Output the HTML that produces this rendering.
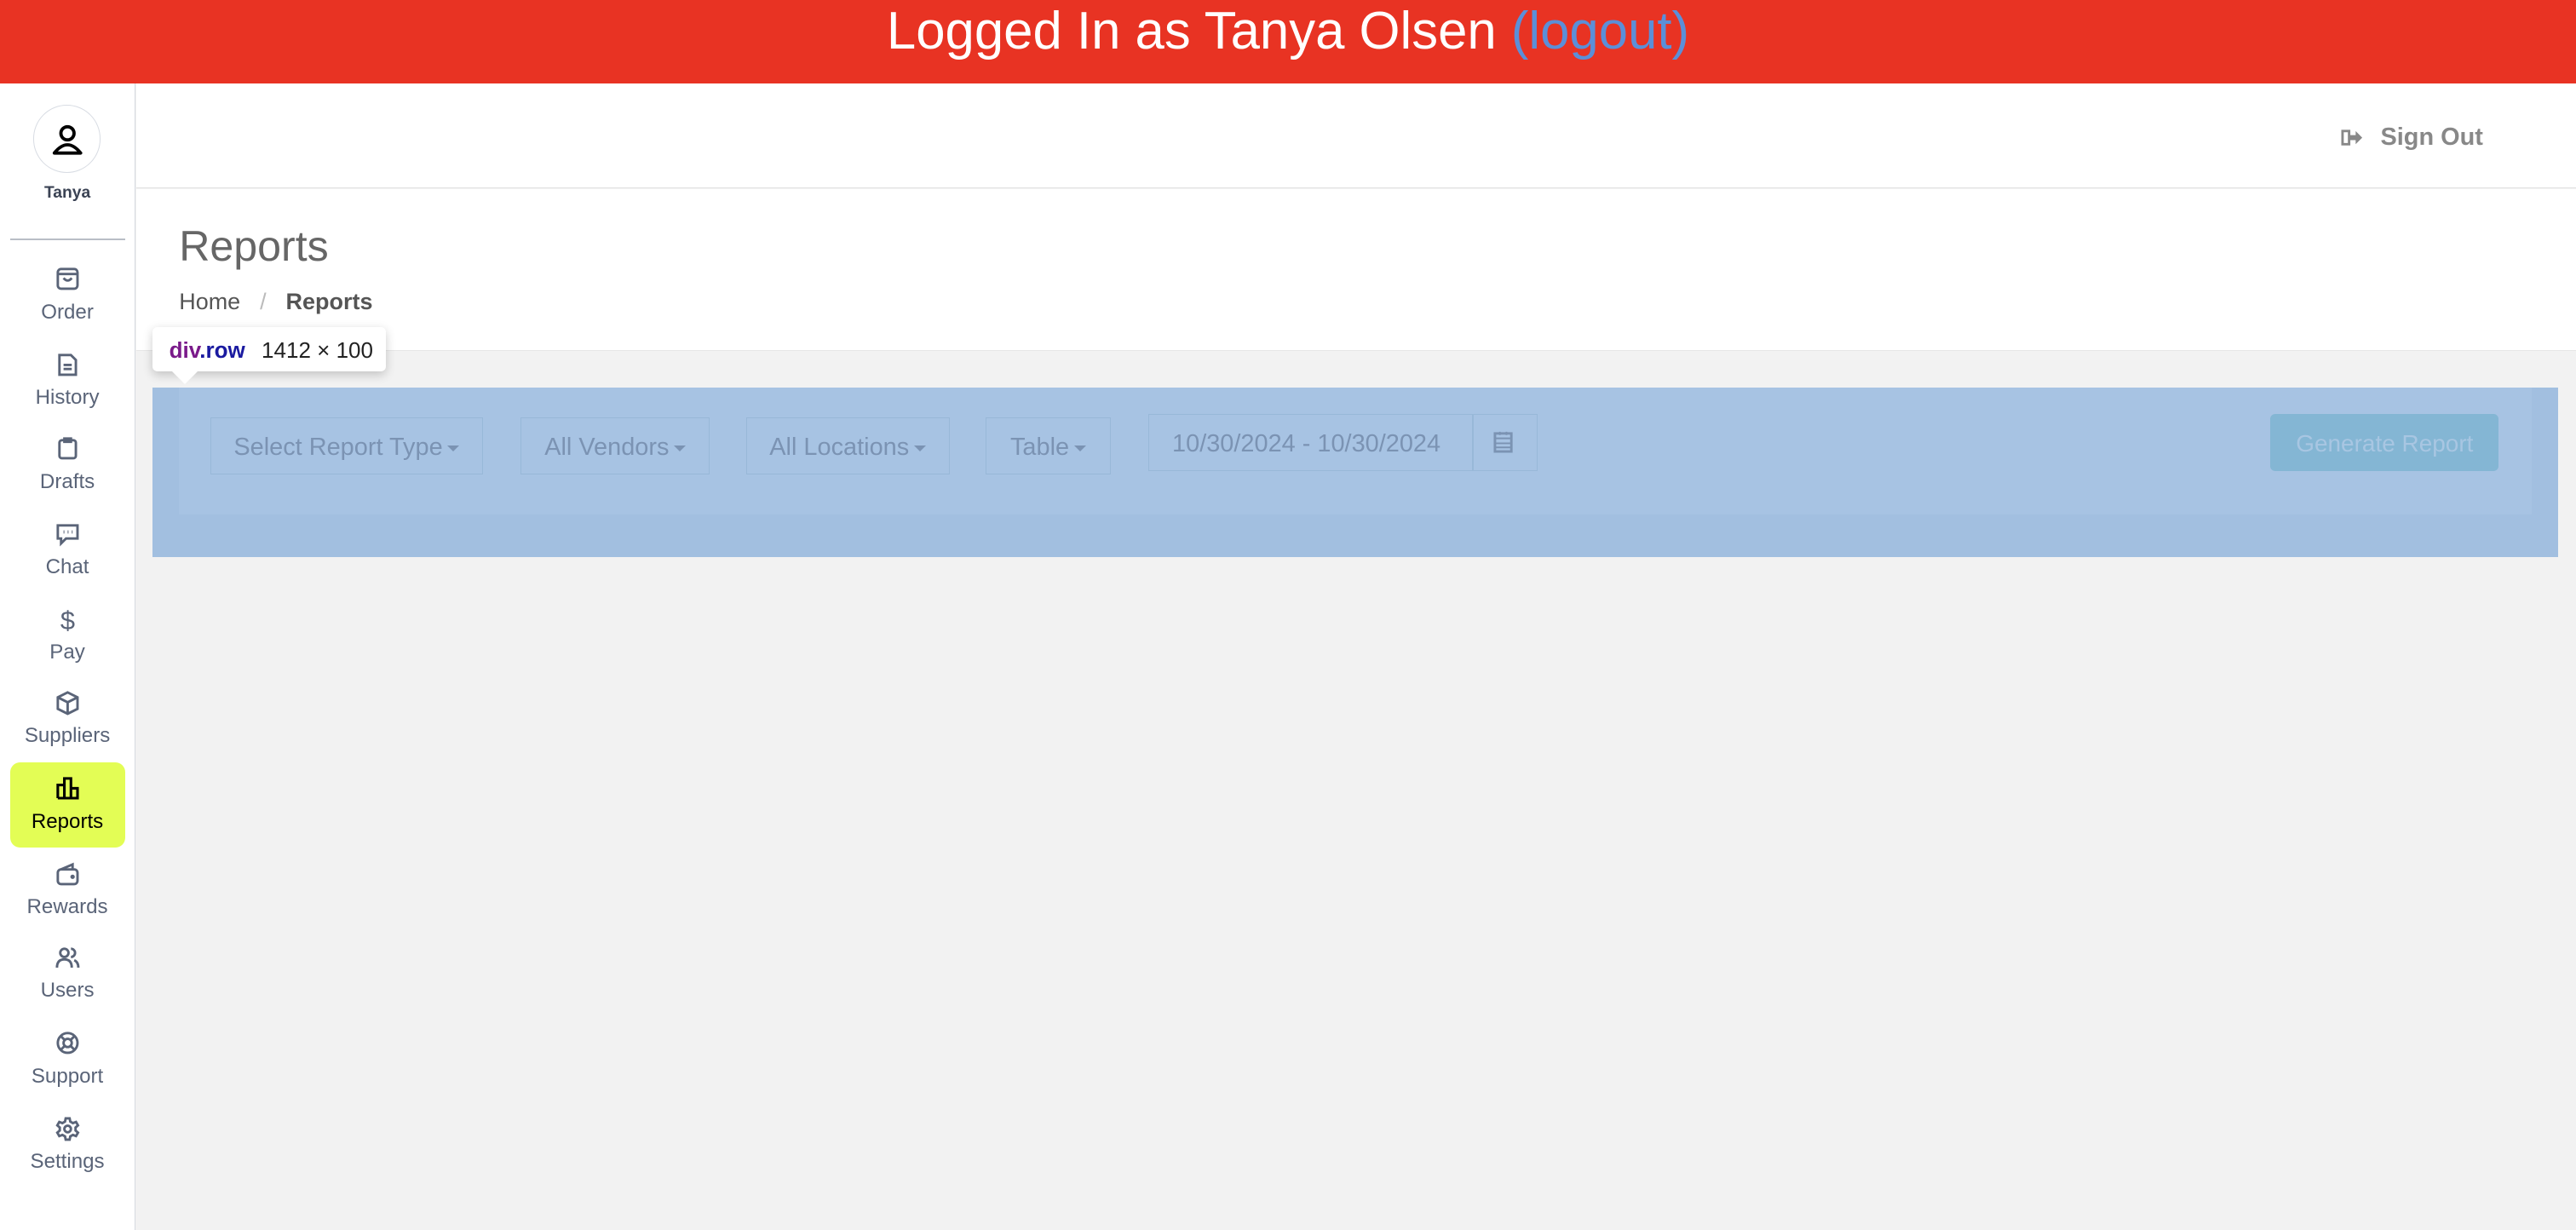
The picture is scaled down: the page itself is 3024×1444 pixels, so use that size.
<!DOCTYPE html>
<html><head><meta charset="utf-8"><style>
html,body{margin:0;padding:0;width:3024px;height:1444px;overflow:hidden;background:#f2f2f2;}
#w{zoom:1.92857;width:1568px;height:749px;position:relative;font-family:"Liberation Sans",sans-serif;background:#f2f2f2;overflow:hidden}
.abs{position:absolute}
#top{left:0;top:0;width:1568px;height:51px;background:#e83323;color:#fff;font-size:32px;text-align:center;line-height:38px}
#top a{color:#5b8fd8;text-decoration:none}
#side{left:0;top:51px;width:82px;height:698px;background:#fff;border-right:1px solid #d5d9e0}
.nav{position:absolute;left:6px;width:70px;height:52px;text-align:center;color:#5a6478;font-size:12.5px}
.nav svg{position:absolute;left:27px;top:-1px;width:16px;height:16px}
.nav span{position:absolute;left:0;right:0;top:20px}
.btn{position:absolute;top:254px;height:35px;border:1px solid #98b8d8;color:#7b93b3;font-size:15px;line-height:36px;box-sizing:border-box;text-align:center}
.car{display:inline-block;border-left:4px solid transparent;border-right:4px solid transparent;border-top:4px solid #7b93b3;vertical-align:middle;margin-left:3px}
</style></head><body><div id="w">
<div id="top" class="abs">Logged In as Tanya Olsen <a>(logout)</a></div>
<div id="side" class="abs">
 <div class="abs" style="left:20px;top:13px;width:40px;height:40px;border:1px solid #d8dce3;border-radius:50%"></div>
 <svg class="abs" style="left:30px;top:23px" width="22" height="22" viewBox="0 0 22 22"><circle cx="11" cy="7" r="4" fill="none" stroke="#000" stroke-width="2"/><path d="M3 19 Q11 9 19 19 Z" fill="none" stroke="#000" stroke-width="2" stroke-linejoin="round"/></svg>
 <div class="abs" style="left:0;width:82px;top:61px;text-align:center;font-size:10px;font-weight:bold;color:#3b4354">Tanya</div>
 <div class="abs" style="left:6px;top:94px;width:70px;height:1px;background:#b9bec6"></div>
</div>
<div class="nav" style="top:163px"><svg viewBox="0 0 16 16" fill="none" stroke="#5a6478" stroke-width="1.5"><rect x="2" y="2" width="12" height="12" rx="2"/><path d="M2 5h12M5.5 7.5q2.5 3 5 0"/></svg><span>Order</span></div>
<div class="nav" style="top:215px"><svg viewBox="0 0 16 16" fill="none" stroke="#5a6478" stroke-width="1.5"><path d="M3 2h7l3 3v9H3z M5.5 8h5M5.5 10.5h5"/></svg><span>History</span></div>
<div class="nav" style="top:266px"><svg viewBox="0 0 16 16" fill="none" stroke="#5a6478" stroke-width="1.5"><rect x="3" y="3" width="10" height="11" rx="1.5"/><path d="M6 2h4v2H6z"/></svg><span>Drafts</span></div>
<div class="nav" style="top:318px"><svg viewBox="0 0 16 16" fill="none" stroke="#5a6478" stroke-width="1.5"><path d="M2 3h12v8H7l-3 3v-3H2z"/><path d="M5.5 7h.5M8 7h.5M10.5 7h.5" stroke-width="2"/></svg><span>Chat</span></div>
<div class="nav" style="top:370px;font-size:12.5px"><svg viewBox="0 0 16 16"><text x="8" y="14" font-size="16" fill="#5a6478" text-anchor="middle" font-family="Liberation Sans">$</text></svg><span>Pay</span></div>
<div class="nav" style="top:421px"><svg viewBox="0 0 16 16" fill="none" stroke="#5a6478" stroke-width="1.5"><path d="M8 1.5l6 3v7l-6 3-6-3v-7z M2 4.5l6 3 6-3M8 7.5v7"/></svg><span>Suppliers</span></div>
<div class="abs" style="left:6px;top:464px;width:70px;height:52px;background:#e3fd55;border-radius:6px"></div>
<div class="nav" style="top:473px;color:#000"><svg viewBox="0 0 16 16" fill="none" stroke="#000" stroke-width="1.6"><path d="M2 14V6h4v8M6 14V2h4v12M10 14V8h4v6z M2 14h12"/></svg><span>Reports</span></div>
<div class="nav" style="top:525px"><svg viewBox="0 0 16 16" fill="none" stroke="#5a6478" stroke-width="1.5"><rect x="2" y="5" width="12" height="9" rx="2"/><path d="M4 5l7-3v3"/><circle cx="11" cy="9.5" r=".6" fill="#5a6478"/></svg><span>Rewards</span></div>
<div class="nav" style="top:576px"><svg viewBox="0 0 16 16" fill="none" stroke="#5a6478" stroke-width="1.5"><circle cx="6" cy="5" r="2.5"/><path d="M1.5 14q0-5 4.5-5t4.5 5M10 2.5a2.5 2.5 0 0 1 0 5M12 9.5q2.5 1 2.5 4.5"/></svg><span>Users</span></div>
<div class="nav" style="top:628px"><svg viewBox="0 0 16 16" fill="none" stroke="#5a6478" stroke-width="1.5"><circle cx="8" cy="8" r="6"/><circle cx="8" cy="8" r="2.5"/><path d="M3.8 3.8l2.4 2.4M12.2 3.8l-2.4 2.4M3.8 12.2l2.4-2.4M12.2 12.2l-2.4-2.4"/></svg><span>Support</span></div>
<div class="nav" style="top:680px"><svg viewBox="0 0 16 16" fill="none" stroke="#5a6478" stroke-width="1.5"><path d="M6.8 1.5h2.4l.4 2 1.6.9 1.9-.7 1.2 2.1-1.5 1.3v1.8l1.5 1.3-1.2 2.1-1.9-.7-1.6.9-.4 2H6.8l-.4-2-1.6-.9-1.9.7-1.2-2.1 1.5-1.3V7.1L1.7 5.8l1.2-2.1 1.9.7 1.6-.9z"/><circle cx="8" cy="8" r="2"/></svg><span>Settings</span></div>
<div class="abs" style="left:83px;top:51px;width:1485px;height:63px;background:#fff;border-bottom:1px solid #e2e2e2"></div>
<svg class="abs" style="left:1425px;top:78px" width="14" height="12" viewBox="0 0 14 12"><path d="M1 2h4v8H1z" fill="none" stroke="#888" stroke-width="1.5"/><path d="M5 4.5h4V2l4 4-4 4V7.5H5z" fill="#888"/></svg>
<div class="abs" style="left:1449px;top:75px;font-size:15px;font-weight:bold;color:#888">Sign Out</div>
<div class="abs" style="left:83px;top:115px;width:1485px;height:98px;background:#fff;border-bottom:1px solid #e6e6e6"></div>
<div class="abs" style="left:109px;top:135px;font-size:26px;color:#666">Reports</div>
<div class="abs" style="left:109px;top:176px;font-size:14px;color:#555">Home <span style="color:#bbb;margin:0 8px">/</span> <b>Reports</b></div>
<div class="abs" style="left:93px;top:236px;width:1464px;height:103px;background:#a2bfe0"></div>
<div class="abs" style="left:109px;top:236px;width:1432px;height:77px;background:#a7c3e3"></div>
<div class="btn" style="left:128px;width:166px">Select Report Type<span class="car"></span></div>
<div class="btn" style="left:317px;width:115px">All Vendors<span class="car"></span></div>
<div class="btn" style="left:454px;width:124px">All Locations<span class="car"></span></div>
<div class="btn" style="left:600px;width:76px">Table<span class="car"></span></div>
<div class="btn" style="left:699px;top:252px;width:237px;text-align:left;padding-left:14px">10/30/2024 - 10/30/2024</div>
<div class="abs" style="left:896px;top:252px;width:1px;height:35px;background:#98b8d8"></div>
<svg class="abs" style="left:909px;top:262px" width="12" height="14" viewBox="0 0 12 14"><rect x="1" y="2" width="10" height="11" fill="none" stroke="#7b93b3" stroke-width="1.5"/><path d="M1 5h10M1 8h10M1 10.5h10M4 1v2M8 1v2" stroke="#7b93b3"/></svg>
<div class="abs" style="left:1382px;top:252px;width:139px;height:35px;background:#84b6d4;border-radius:3px;color:#a8c6e2;font-size:14.5px;line-height:36px;text-align:center">Generate Report</div>
<div class="abs" style="left:93px;top:199px;width:142px;height:27px;background:#fff;border-radius:3px;box-shadow:0 2px 6px rgba(0,0,0,.2);font-size:13.5px;line-height:28px;color:#222"><span style="margin-left:10px;font-weight:bold;color:#7a1a8a">div</span><b style="color:#1a1aa0">.row</b><span style="margin-left:10px">1412 × 100</span></div>
<div class="abs" style="left:105px;top:226px;width:0;height:0;border-left:8px solid transparent;border-right:8px solid transparent;border-top:8px solid #fff"></div>
</div></body></html>
